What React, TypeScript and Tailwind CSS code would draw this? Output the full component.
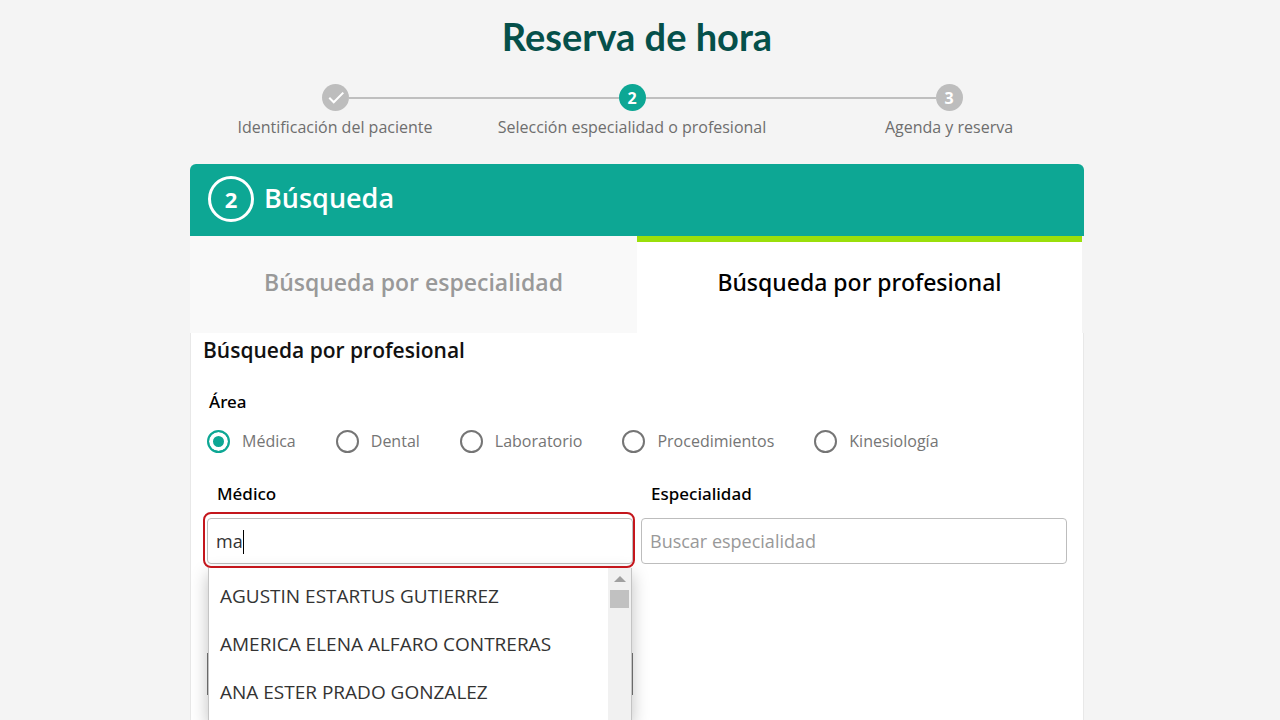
import { useState } from 'react'

const steps = [
    { id: 1, label: 'Identificación del paciente', done: true },
    { id: 2, label: 'Selección especialidad o profesional', done: false },
    { id: 3, label: 'Agenda y reserva', done: false },
]

const areas = ['Médica', 'Dental', 'Laboratorio', 'Procedimientos', 'Kinesiología']

const doctors = [
    'AGUSTIN ESTARTUS GUTIERREZ',
    'AMERICA ELENA ALFARO CONTRERAS',
    'ANA ESTER PRADO GONZALEZ',
]

const Stepper = ({ current }: { current: number }) => {
    return (
        <ol className="mt-6 grid grid-cols-[230fr_364fr_270fr] pl-[30px]">
            {steps.map((step, i) => (
                <li key={step.id} className="flex flex-col items-center">
                    <div className="flex w-full items-center">
                        <span className={i === 0 ? 'h-0.5 flex-1' : 'h-0.5 flex-1 bg-[#bfbfbf]'}></span>
                        <span className={`flex size-[27px] items-center justify-center rounded-full text-base font-bold text-white ${step.id === current ? 'bg-[#0da794]' : 'bg-[#bdbdbd]'}`}>
                            {step.done ? (
                                <svg viewBox="0 0 26 26" className="size-[27px]" fill="none" stroke="currentColor" strokeWidth="2" aria-label="Completado">
                                    <path d="M7 13.2l4.3 4.3L20.5 8.3" />
                                </svg>
                            ) : step.id}
                        </span>
                        <span className={i === steps.length - 1 ? 'h-0.5 flex-1' : 'h-0.5 flex-1 bg-[#bfbfbf]'}></span>
                    </div>
                    <p className="mt-1 text-base leading-6 whitespace-nowrap text-[#6e6e6e]">{step.label}</p>
                </li>
            ))}
        </ol>
    )
}

const DoctorList = ({ onSelect }: { onSelect: (name: string) => void }) => {
    return (
        <div className="absolute inset-x-px top-full z-10 mt-1 flex border-x border-[#c4c4c4] bg-white shadow-[0_6px_16px_rgba(0,0,0,0.25)]">
            <ul className="flex-1 py-1">
                {doctors.map((name) => (
                    <li key={name}>
                        <button type="button" onClick={() => onSelect(name)} className="h-12 w-full px-[11px] text-left text-[19px] whitespace-nowrap text-[#333]">
                            {name}
                        </button>
                    </li>
                ))}
            </ul>
            <div className="flex w-[23px] flex-col items-center bg-[#f1f1f1] pt-2">
                <svg viewBox="0 0 12 6" className="h-1.5 w-3 fill-[#a0a0a0]" aria-hidden="true">
                    <path d="M0 6L6 0l6 6z" />
                </svg>
                <span className="mt-2 h-[18px] w-[19px] bg-[#c1c1c1]"></span>
            </div>
        </div>
    )
}

const App = () => {
    const [area, setArea] = useState('Médica')
    const [doctor, setDoctor] = useState('ma')
    const [specialty, setSpecialty] = useState('')

    return (
        <div className="flex min-h-screen flex-col bg-[#f4f4f4] pr-1.5 font-['Open_Sans','Noto_Sans',sans-serif]">
            <main className="mx-auto flex w-full max-w-[894px] flex-1 flex-col">
                <h1 className="pt-3 text-center font-['Lato','Open_Sans',sans-serif] text-[38px] leading-[48px] font-bold text-[#05504a]">Reserva de hora</h1>
                <Stepper current={2} />

                <section className="mt-[25px] flex flex-1 flex-col">
                    <header className="flex h-[72px] items-center gap-2.5 rounded-t-md bg-[#0da794] px-[18px] pb-0.5 text-white">
                        <span className="flex size-[46px] items-center justify-center rounded-full border-3 border-white text-[22px] font-bold">2</span>
                        <h2 className="pb-0.5 text-[27px] leading-9 font-semibold">Búsqueda</h2>
                    </header>

                    <div role="tablist" className="mr-0.5 grid grid-cols-[447fr_445fr]">
                        <button role="tab" aria-selected="false" type="button" className="h-[97px] border-t-[6px] border-[#f9f9f9] bg-[#f9f9f9] pb-2.5 text-[23px] font-semibold text-[#999]">Búsqueda por especialidad</button>
                        <button role="tab" aria-selected="true" type="button" className="h-[97px] border-t-[6px] border-[#9adf0a] bg-white pb-2.5 font-['Noto_Sans','Open_Sans',sans-serif] text-[23px] font-medium text-black">Búsqueda por profesional</button>
                    </div>

                    <form className="flex-1 border-x border-[#e8e8e8] bg-white px-4">
                        <h3 className="-ml-1 pt-[3px] text-[21px] leading-7 font-semibold text-[#111]">Búsqueda por profesional</h3>

                        <fieldset className="mt-[26px]">
                            <legend className="px-0.5 font-['Noto_Sans','Open_Sans',sans-serif] text-[17px] leading-6 font-medium text-black">Área</legend>
                            <div className="mt-[15px] flex gap-10">
                                {areas.map((name) => (
                                    <label key={name} className="flex items-center gap-3 text-base leading-6 text-[#757575]">
                                        <input
                                            type="radio"
                                            name="area"
                                            value={name}
                                            checked={area === name}
                                            onChange={() => setArea(name)}
                                            className="size-[23px] appearance-none rounded-full border-2 border-[#757575] bg-white checked:border-[#0da794] checked:bg-[#0da794] checked:shadow-[inset_0_0_0_4px_white]"
                                        />
                                        {name}
                                    </label>
                                ))}
                            </div>
                        </fieldset>

                        <div className="mt-[29px] grid grid-cols-2 gap-x-2">
                            <div>
                                <label htmlFor="doctor" className="block px-2.5 font-['Noto_Sans','Open_Sans',sans-serif] text-[17px] leading-6 font-medium text-black">Médico</label>
                                <div className="relative mt-3">
                                    <input
                                        id="doctor"
                                        type="text"
                                        autoComplete="off"
                                        value={doctor}
                                        onChange={(e) => setDoctor(e.target.value)}
                                        className="block h-[46px] w-full rounded border border-[#bdbdbd] bg-white px-2 text-[18px] text-[#333] caret-transparent outline-none"
                                    />
                                    {/* highlight ring and cursor */}
                                    <span className="pointer-events-none absolute -top-1.5 -right-0.5 -bottom-1 -left-1 z-20 rounded-lg border-2 border-[#c4161c]"></span>
                                    <span className="pointer-events-none absolute top-3 left-9 h-6 w-px bg-black"></span>
                                    <DoctorList onSelect={setDoctor} />
                                </div>
                            </div>
                            <div>
                                <label htmlFor="specialty" className="block px-2.5 font-['Noto_Sans','Open_Sans',sans-serif] text-[17px] leading-6 font-medium text-black">Especialidad</label>
                                <input
                                    id="specialty"
                                    type="text"
                                    placeholder="Buscar especialidad"
                                    value={specialty}
                                    onChange={(e) => setSpecialty(e.target.value)}
                                    className="mt-3 block h-[46px] w-full rounded border border-[#bdbdbd] bg-white px-2 text-[18px] text-[#333] outline-none placeholder:text-[#999]"
                                />
                            </div>
                            <div className="mt-[89px] h-[42px] border border-[#777] bg-white"></div>
                        </div>
                    </form>
                </section>
            </main>
        </div>
    )
}

export default App
